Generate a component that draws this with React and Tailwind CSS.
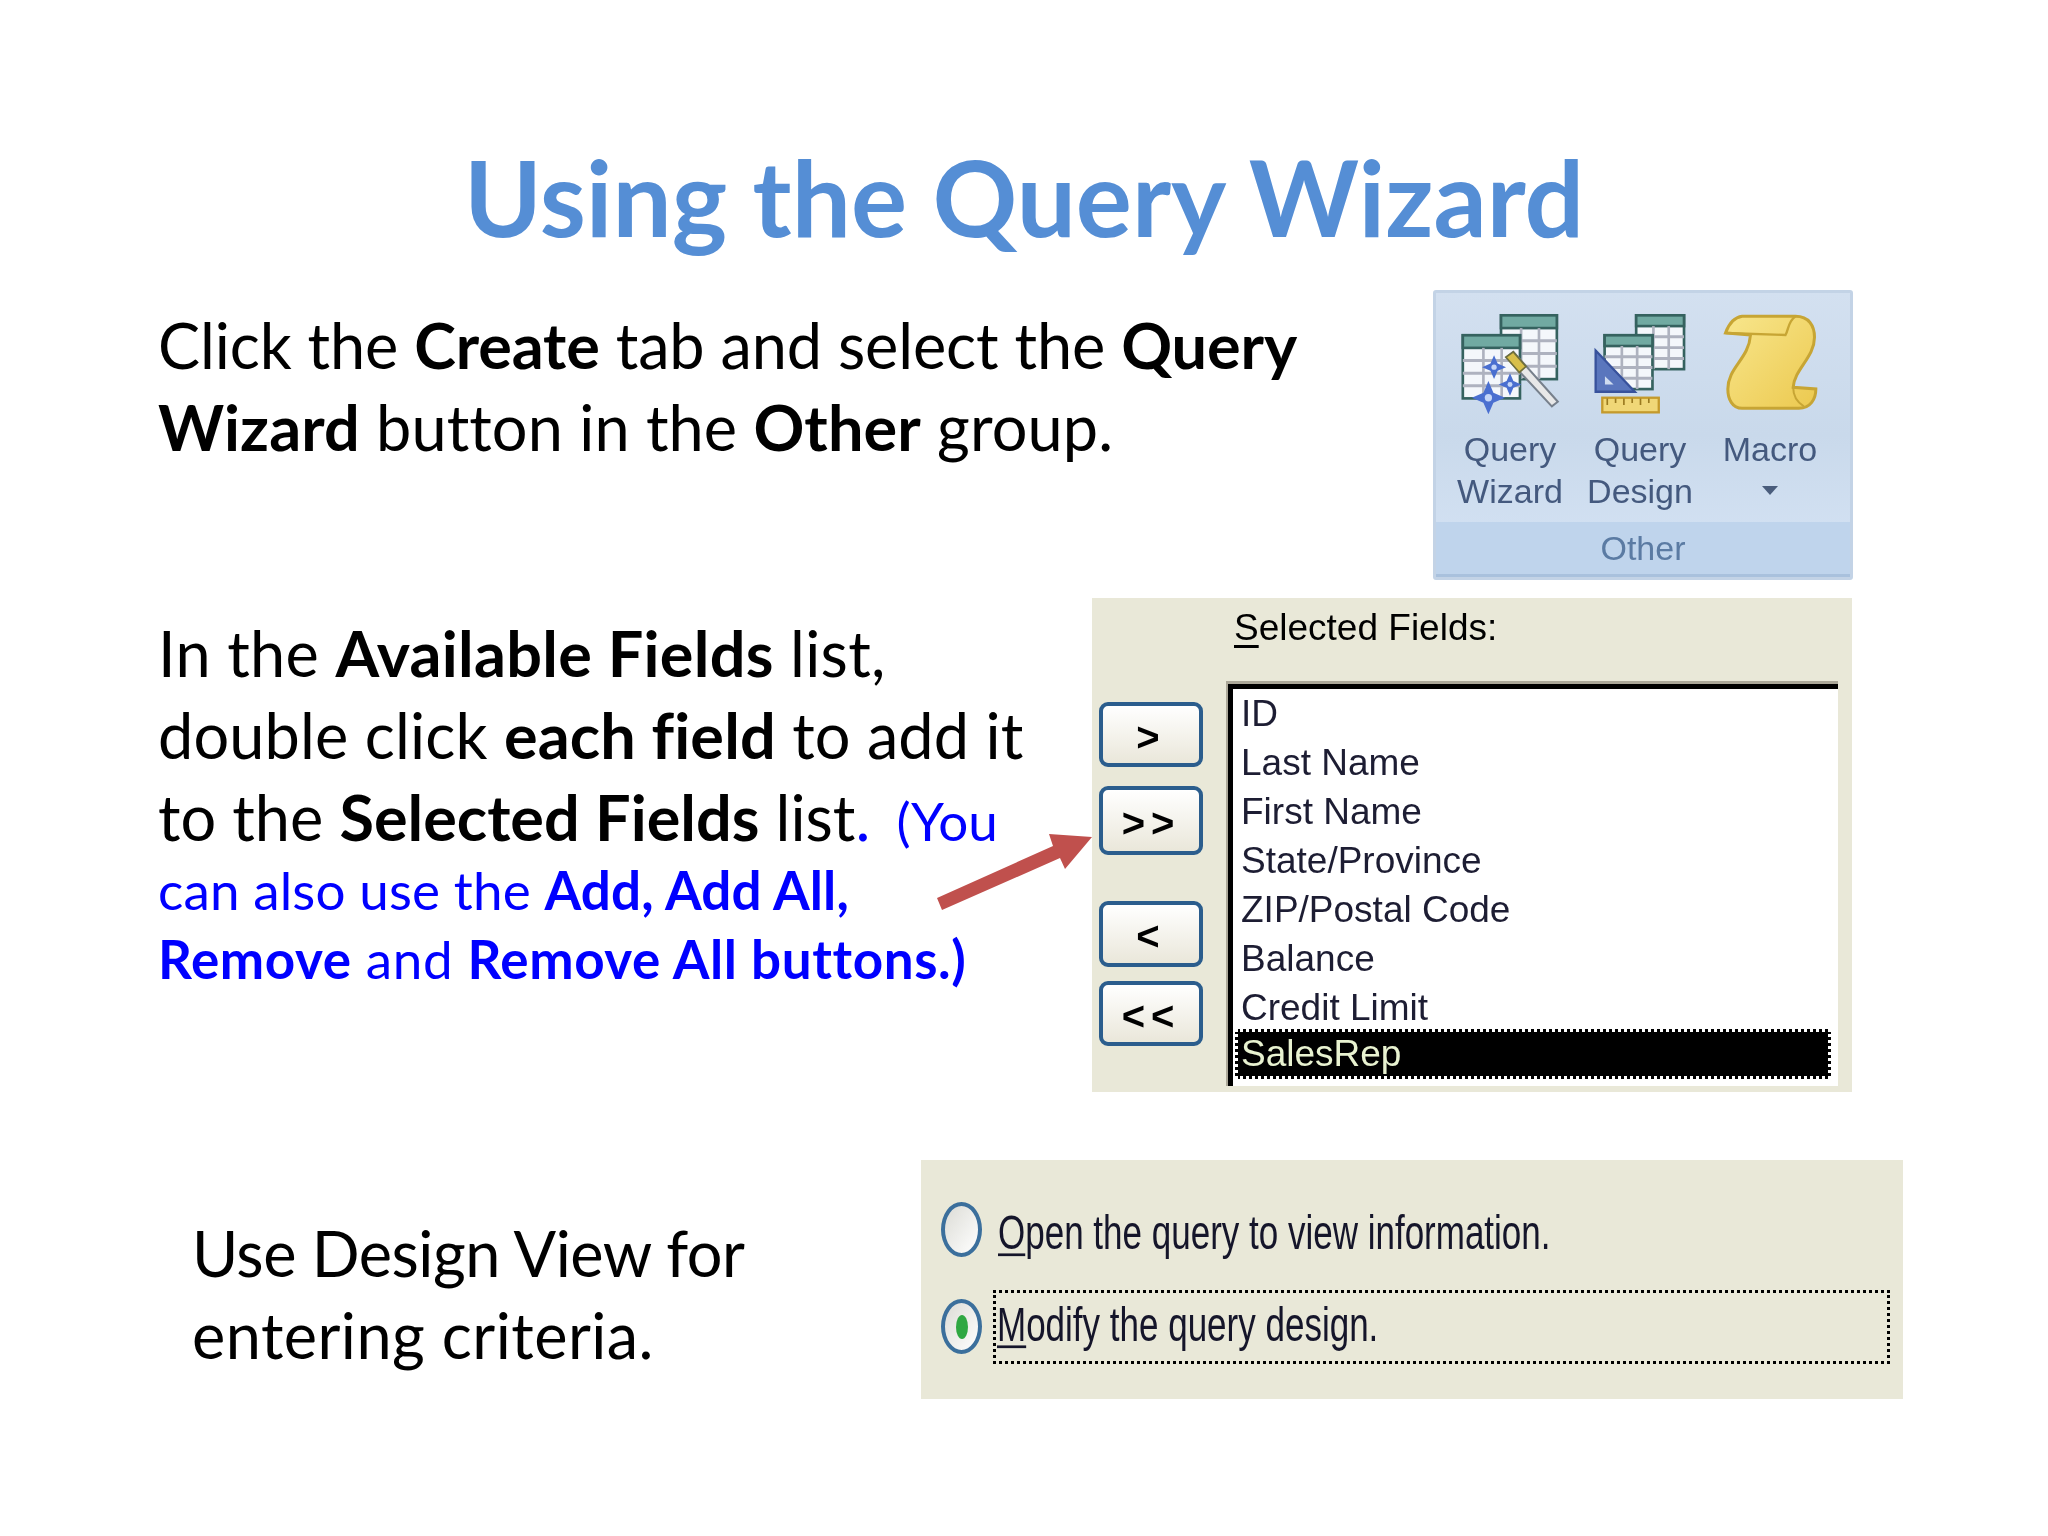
import React from 'react';

// one small grid table, used by both query icons
const MiniTable = ({ x, y, w, h, line = '#35625f', rows = 4 }) => {
  const head = h * 0.2;
  const rowH = (h - head) / rows;
  return (
    <g>
      <rect x={x} y={y} width={w} height={h} fill="#f4f7fb" stroke={line} strokeWidth="8" />
      <rect x={x} y={y} width={w} height={head} fill="#71aaa2" stroke={line} strokeWidth="8" />
      {Array.from({ length: rows - 1 }).map((_, i) => (
        <line key={i} x1={x} x2={x + w} y1={y + head + rowH * (i + 1)} y2={y + head + rowH * (i + 1)} stroke="#aeb2bf" strokeWidth="9" />
      ))}
      <line x1={x + w * 0.36} x2={x + w * 0.36} y1={y + head} y2={y + h} stroke="#aeb2bf" strokeWidth="8" />
      <line x1={x + w * 0.68} x2={x + w * 0.68} y1={y + head} y2={y + h} stroke="#aeb2bf" strokeWidth="8" />
    </g>
  );
};

const Sparkle = ({ x, y, r }) => (
  <g>
    <path d={`M${x} ${y - r} L${x + r * 0.3} ${y - r * 0.3} L${x + r} ${y} L${x + r * 0.3} ${y + r * 0.3} L${x} ${y + r} L${x - r * 0.3} ${y + r * 0.3} L${x - r} ${y} L${x - r * 0.3} ${y - r * 0.3} Z`} fill="#4a6fd0" />
    <circle cx={x} cy={y} r={r * 0.22} fill="#c5d6f7" />
  </g>
);

const WizardIcon = () => (
  <svg viewBox="120 95 300 310" className="w-[100px] h-[103px]">
    <MiniTable x={243} y={102} w={168} h={192} />
    <MiniTable x={128} y={162} w={172} h={190} />
    <path d="M258 228 L280 212 L414 362 L396 376 Z" fill="#e8e8e8" stroke="#77808c" strokeWidth="6" />
    <path d="M258 228 L280 212 L318 256 L298 274 Z" fill="#d8bf4a" stroke="#6f6f3c" strokeWidth="5" />
    <Sparkle x={222} y={258} r={36} />
    <Sparkle x={270} y={310} r={34} />
    <Sparkle x={205} y={350} r={50} />
  </svg>
);

const DesignIcon = () => (
  <svg viewBox="520 95 290 310" className="w-[97px] h-[103px]">
    <MiniTable x={652} y={102} w={144} h={162} />
    <MiniTable x={557} y={162} w={144} h={162} />
    <path d="M530 208 L648 332 L530 332 Z" fill="#5a76bd" stroke="#38529c" strokeWidth="7" />
    <path d="M558 285 L584 310 L558 310 Z" fill="#cfdcf0" />
    <rect x="550" y="350" width="170" height="44" fill="#f0d777" stroke="#c49a2c" strokeWidth="7" />
    <path d="M565 352 V372 M590 352 V366 M615 352 V372 M640 352 V366 M665 352 V372 M690 352 V366" stroke="#9a7a20" strokeWidth="5" />
  </svg>
);

const MacroIcon = () => (
  <svg viewBox="905 92 290 300" className="w-[97px] h-[100px]">
    <defs>
      <linearGradient id="scroll" x1="0" y1="0" x2="1" y2="1">
        <stop offset="0" stopColor="#f8e68c" />
        <stop offset="1" stopColor="#ecc94f" />
      </linearGradient>
    </defs>
    <path d="M915 152 C925 125 940 105 965 102 L1125 102 C1165 102 1182 130 1182 165 C1182 225 1122 260 1118 315 L1186 320 C1186 350 1170 378 1135 378 L965 378 C935 378 922 350 922 320 C922 255 985 230 990 158 Z" fill="url(#scroll)" stroke="#c7a534" strokeWidth="9" />
    <path d="M915 152 L1095 158 C1105 140 1102 118 1125 102" fill="none" stroke="#c7a534" strokeWidth="7" />
    <path d="M1118 315 C1118 340 1130 360 1150 372" fill="none" stroke="#c7a534" strokeWidth="6" />
  </svg>
);

const RibbonPanel = () => (
  <div className="w-[420px] h-[290px] flex flex-col border-[3px] border-[#c3d3e6] rounded-[3px] bg-gradient-to-b from-[#d3e0f0] via-[#c9d9eb] to-[#d6e4f5] overflow-hidden font-['Liberation_Sans',sans-serif] text-[#44597e] blur-[0.6px]">
    <div className="grid grid-cols-[130px_130px_130px] pl-[9px] pt-[20px] h-[229px]">
      {[
        { icon: <WizardIcon />, lines: ['Query', 'Wizard'] },
        { icon: <DesignIcon />, lines: ['Query', 'Design'] },
        { icon: <MacroIcon />, lines: ['Macro'], caret: true },
      ].map((btn, i) => (
        <div key={i} className="flex flex-col items-center">
          <div className="h-[115px] flex items-start">{btn.icon}</div>
          {btn.lines.map((t) => (
            <span key={t} className="text-[34px] leading-[42px] whitespace-nowrap">{t}</span>
          ))}
          {btn.caret && <span className="mt-[16px] w-0 h-0 border-x-[8px] border-x-transparent border-t-[9px] border-t-[#4a5d7c]" />}
        </div>
      ))}
    </div>
    <div className="flex-1 bg-[#bfd4ec] flex items-center justify-center text-[34px] text-[#5b7ba3] leading-none border-b-[3px] border-[#a9c1dd]">Other</div>
  </div>
);

const MoveButton = ({ label, className }) => (
  <button className={`w-[104px] pt-[4px] flex items-center justify-center border-[4px] border-[#2b5d8d] rounded-[9px] bg-gradient-to-b from-white to-[#eae7da] text-[40px] font-bold text-black leading-none tracking-[6px] ${className}`}>
    {label}
  </button>
);

const fields = ['ID', 'Last Name', 'First Name', 'State/Province', 'ZIP/Postal Code', 'Balance', 'Credit Limit'];

const FieldsPanel = () => (
  <div className="relative w-[760px] h-[494px] bg-[#e9e8d8] pl-[7px] flex font-['Liberation_Sans',sans-serif] text-black blur-[0.5px]">
    <div className="w-[127px] pt-[104px] flex flex-col">
      <MoveButton label=">" className="h-[65px] mb-[19px]" />
      <MoveButton label=">>" className="h-[69px] mb-[46px]" />
      <MoveButton label="<" className="h-[66px] mb-[14px]" />
      <MoveButton label="<<" className="h-[65px]" />
    </div>
    <div className="flex-1 pr-[14px]">
      <div className="h-[83px] pl-[8px] pt-[6px] text-[37px] leading-[48px]">
        <span className="underline underline-offset-[5px] decoration-[3px]">S</span>elected Fields:
      </div>
      <div className="h-[405px] bg-[#aca899] pt-[3px] pl-[2px]">
        <div className="h-[402px] bg-white border-t-[5px] border-l-[5px] border-t-black border-l-black pl-[2px] pr-[7px] text-[37px]">
          <div className="-mb-[3px]">
            {fields.map((f) => (
              <div key={f} className="h-[49px] leading-[49px] pl-[6px] text-[#1d1d33]">{f}</div>
            ))}
          </div>
          <div className="h-[50px] bg-black border-[3px] border-dotted border-white text-[#e8f2d0] leading-[44px] pl-[3px]">SalesRep</div>
        </div>
      </div>
    </div>
  </div>
);

const Radio = ({ checked }) => (
  <span className="w-[41px] h-[55px] rounded-[50%] border-[4px] border-[#3b6f9c] bg-gradient-to-br from-[#dcdcd6] to-white flex items-center justify-center shrink-0">
    {checked && <span className="w-[12px] h-[24px] rounded-[50%] bg-[#2fa843]" />}
  </span>
);

const OptionsPanel = () => (
  <div className="w-[982px] h-[239px] bg-[#e9e8d8] pl-[20px] pr-[13px] pt-[42px] flex flex-col font-['Liberation_Sans',sans-serif] text-[35px] text-[#15152a] blur-[0.5px]">
    <div className="flex items-center gap-[16px] h-[55px]">
      <Radio />
      <span className="inline-block mt-[5px] scale-y-[1.35] leading-none">
        <span className="underline underline-offset-[3px] decoration-[2px]">O</span>pen the query to view information.
      </span>
    </div>
    <div className="flex items-center gap-[11px] mt-[42px] h-[55px]">
      <Radio checked />
      <div className="flex-1 h-[74px] border-[3px] border-dotted border-black flex items-center pl-[1px]">
        <span className="inline-block -mt-[5px] scale-y-[1.35] leading-none">
          <span className="underline underline-offset-[3px] decoration-[2px]">M</span>odify the query design.
        </span>
      </div>
    </div>
  </div>
);

const App = () => (
  <div className="relative w-[2048px] h-[1536px] bg-white overflow-hidden font-['Lato',sans-serif] text-black">
    <h1 className="h-[290px] pt-[136px] text-center text-[105px] leading-[120px] font-bold text-[#558ed5]">
      Using the Query Wizard
    </h1>

    {/* Create tab / ribbon */}
    <div className="h-[290px] flex justify-between pl-[158px] pr-[195px]">
      <p className="w-[1250px] pt-[14px] text-[63px] leading-[82px]">
        <span className="tracking-[-0.12px]">Click the <b>Create</b> tab and select the <b>Query</b></span>
        <br />
        <span className="tracking-[0.1px]"><b>Wizard</b> button in the <b>Other</b> group.</span>
      </p>
      <RibbonPanel />
    </div>

    {/* Available fields */}
    <div className="relative mt-[18px] h-[494px] flex justify-between pl-[158px] pr-[196px]">
      <div className="pt-[14px] text-[63px] leading-[82px]">
        <p className="tracking-[0.27px]">In the <b>Available Fields</b> list,</p>
        <p className="tracking-[0.15px]">double click <b>each field</b> to add it</p>
        <p className="whitespace-nowrap">to the <b>Selected Fields</b> list<span className="text-[#0000ff]">.</span> <span className="text-[53px] text-[#0000ff] pl-[10px]">(You</span></p>
        <div className="-mt-[7px] text-[53px] leading-[69px] text-[#0000ff]">
          <p className="tracking-[0.12px]">can also use the <b>Add, Add All,</b></p>
          <p className="tracking-[0.6px]"><b>Remove</b> and <b>Remove All buttons.)</b></p>
        </div>
      </div>
      <FieldsPanel />
      <svg viewBox="0 0 160 80" className="absolute left-[936px] top-[232px] w-[160px] h-[80px]">
        <path d="M1 68 L117 16 L113 4 L156 7 L129 39 L124 28 L6 80 Z" fill="#c0504d" />
      </svg>
    </div>

    {/* Design view */}
    <div className="mt-[68px] h-[239px] flex justify-between pl-[192px] pr-[145px]">
      <p className="pt-[52px] text-[63px] leading-[82px] whitespace-nowrap">
        <span className="tracking-[-0.45px]">Use Design View for</span>
        <br />
        <span className="tracking-[0.45px]">entering criteria.</span>
      </p>
      <OptionsPanel />
    </div>
  </div>
);

export default App;
